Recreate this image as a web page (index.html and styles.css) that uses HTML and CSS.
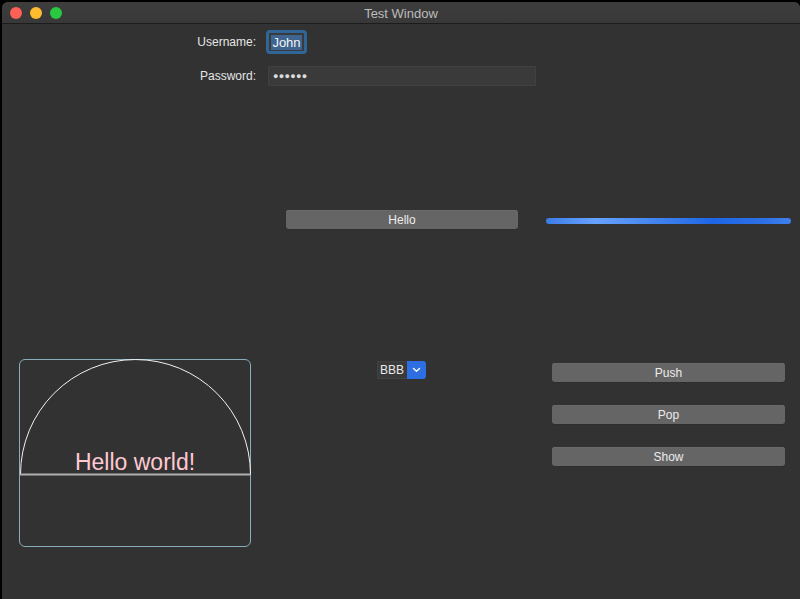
FILE: index.html
```html
<!DOCTYPE html>
<html>
<head>
<meta charset="utf-8">
<link rel="stylesheet" href="styles.css">
</head>
<body>
<div class="window">
  <div class="titlebar">
    <div class="lights">
      <span class="light red"></span>
      <span class="light yellow"></span>
      <span class="light green"></span>
    </div>
    <div class="title">Test Window</div>
  </div>
  <div class="content">
    <div class="form">
      <label class="label">Username:</label>
      <div class="user-ring"><div class="user-field"><span class="sel">John</span></div></div>
      <label class="label">Password:</label>
      <div class="pass-field">●●●●●●</div>
    </div>
    <div class="mid-row">
      <button class="btn hello">Hello</button>
      <div class="progress"></div>
    </div>
    <div class="bottom-row">
      <div class="canvas">
        <svg width="232" height="188" viewBox="0 0 232 188">
          <path d="M1.5 115.5 A115 115 0 0 1 231.5 115.5" fill="none" stroke="#f2f2f2" stroke-width="1"/>
          <line x1="1" y1="115.5" x2="231" y2="115.5" stroke="#b0b0b0" stroke-width="2"/>
          <text x="116" y="111" text-anchor="middle" class="hw">Hello world!</text>
        </svg>
      </div>
      <div class="combo">
        <div class="combo-text">BBB</div>
        <div class="combo-btn">
          <svg width="9" height="6" viewBox="0 0 9 6"><path d="M1.5 1.5 L4.5 4.2 L7.5 1.5" fill="none" stroke="#fff" stroke-width="1.4" stroke-linecap="round" stroke-linejoin="round"/></svg>
        </div>
      </div>
      <div class="btn-col">
        <button class="btn side">Push</button>
        <button class="btn side">Pop</button>
        <button class="btn side">Show</button>
      </div>
    </div>
  </div>
</div>
</body>
</html>
```

FILE: styles.css
```css
html, body {
  margin: 0;
  padding: 0;
  background: #000;
  width: 800px;
  height: 599px;
  overflow: hidden;
  font-family: "Liberation Sans", Arial, sans-serif;
}
.window {
  margin: 2px 0 0 2px;
  width: 798px;
  height: 597px;
  background: #323232;
  border-radius: 6px 6px 0 0;
  overflow: hidden;
  display: flex;
  flex-direction: column;
}
.titlebar {
  height: 21px;
  background: linear-gradient(#3d3d3d, #383838);
  border-bottom: 1px solid #1c1c1c;
  display: flex;
  align-items: center;
  position: relative;
}
.lights {
  display: flex;
  gap: 8px;
  margin-left: 8px;
  margin-top: 1px;
}
.light {
  width: 12px;
  height: 12px;
  border-radius: 50%;
  display: block;
}
.red { background: #fe5f57; }
.yellow { background: #febc2e; }
.green { background: #28c840; }
.title {
  position: absolute;
  left: 0;
  right: 0;
  top: 4px;
  text-align: center;
  font-size: 13px;
  color: #bcbcbc;
}
.content {
  flex: 1;
  display: flex;
  flex-direction: column;
}
.form {
  display: grid;
  grid-template-columns: 254px auto;
  column-gap: 10px;
  row-gap: 12px;
  margin-top: 6px;
  align-items: center;
  justify-content: start;
}
.label {
  text-align: right;
  font-size: 12px;
  color: #e6e6e6;
}
.user-ring {
  width: 35px;
  height: 18px;
  border: 3px solid #2f6597;
  border-radius: 4px;
  background: #3a3a3a;
  display: flex;
  align-items: center;
  justify-content: center;
}
.user-field {
  display: flex;
  align-items: center;
}
.sel {
  background: #3e6590;
  color: #f4f4f4;
  font-size: 13px;
  line-height: 15px;
  padding: 0 1px;
}
.pass-field {
  margin-left: 2px;
  width: 262px;
  height: 18px;
  border: 1px solid #404040;
  background: #3a3a3a;
  color: #dcdcdc;
  font-size: 9px;
  line-height: 18px;
  padding-left: 4px;
  box-sizing: content-box;
  letter-spacing: 0.3px;
}
.mid-row {
  display: flex;
  align-items: center;
  margin-top: 124px;
}
.btn {
  background: #656565;
  border: none;
  border-radius: 3px;
  color: #ececec;
  font-family: "Liberation Sans", Arial, sans-serif;
  font-size: 12px;
  height: 19px;
  padding: 0;
  box-shadow: 0 0.5px 0 #2a2a2a, inset 0 0.5px 0 #707070;
}
.hello {
  margin-left: 284px;
  width: 232px;
}
.progress {
  margin-left: 28px;
  width: 245px;
  height: 6px;
  border-radius: 3px;
  background: linear-gradient(90deg, #3b7ce6 0%, #68a2ff 20%, #4a8af0 40%, #1e66e6 68%, #2d70e6 88%, #3e80ec 100%);
  margin-top: 2px;
}
.bottom-row {
  display: flex;
  align-items: flex-start;
  margin-top: 130px;
}
.canvas {
  margin-left: 17px;
  width: 230px;
  height: 186px;
  border: 1px solid #86aebd;
  border-radius: 6px;
  position: relative;
  overflow: visible;
}
.canvas svg {
  position: absolute;
  left: -1px;
  top: -1px;
}
.hw {
  font-family: "Liberation Sans", Arial, sans-serif;
  font-size: 23px;
  fill: #ffc9d2;
}
.combo {
  display: flex;
  margin-left: 126px;
  margin-top: 2px;
  height: 18px;
}
.combo-text {
  width: 27px;
  height: 16px;
  border: 1px solid #424242;
  border-right: none;
  background: #3a3a3a;
  color: #eaeaea;
  font-size: 12px;
  line-height: 16px;
  padding-left: 2px;
}
.combo-btn {
  width: 19px;
  height: 18px;
  background: #2d6ee2;
  border-radius: 0 3px 3px 0;
  display: flex;
  align-items: center;
  justify-content: center;
}
.btn-col {
  display: flex;
  flex-direction: column;
  gap: 23px;
  margin-left: 126px;
  margin-top: 4px;
}
.side {
  width: 233px;
}
```
